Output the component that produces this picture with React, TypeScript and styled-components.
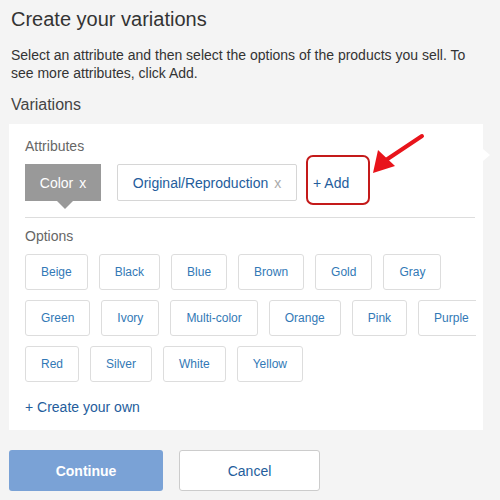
import React from "react";
import styled, { createGlobalStyle } from "styled-components";

const Global = createGlobalStyle`
  html, body { margin: 0; padding: 0; background: #f4f4f4; }
  body { font-family: "Liberation Sans", Arial, sans-serif; width: 500px; height: 500px; overflow: hidden; }
  * { box-sizing: border-box; }
`;

const Page = styled.div`
  position: relative;
  width: 500px;
  height: 500px;
  padding: 7px 0 0 9px;
`;

const Title = styled.h1`
  margin: 0 0 0 2px;
  font-size: 20px;
  font-weight: normal;
  line-height: 24px;
  color: #333;
`;

const Intro = styled.p`
  margin: 15px 0 0 2px;
  font-size: 14px;
  line-height: 18px;
  color: #333;
  width: 480px;
`;

const SectionTitle = styled.h2`
  margin: 13px 0 0 2px;
  font-size: 16px;
  font-weight: normal;
  line-height: 20px;
  color: #444;
`;

const Panel = styled.div`
  position: relative;
  margin-top: 9px;
  width: 474px;
  background: #fff;
  padding: 14px 7px 14px 16px;
  &::after {
    content: "";
    position: absolute;
    right: -7px;
    top: 25px;
    border-top: 6px solid transparent;
    border-bottom: 6px solid transparent;
    border-left: 7px solid #fff;
  }
`;

const Label = styled.div`
  font-size: 14px;
  line-height: 17px;
  color: #666;
`;

const AttrRow = styled.div`
  display: flex;
  align-items: center;
  margin-top: 9px;
  height: 37px;
`;

const ActiveChip = styled.div`
  position: relative;
  width: 76px;
  height: 37px;
  background: #999;
  color: #fff;
  font-size: 14px;
  display: flex;
  align-items: center;
  justify-content: center;
  gap: 6px;
  &::after {
    content: "";
    position: absolute;
    left: 32px;
    bottom: -8px;
    border-left: 8px solid transparent;
    border-right: 8px solid transparent;
    border-top: 8px solid #999;
  }
`;

const AttrChip = styled.div`
  margin-left: 16px;
  width: 180px;
  height: 37px;
  border: 1px solid #d6d6d6;
  border-radius: 2px;
  display: flex;
  align-items: center;
  justify-content: center;
  gap: 6px;
  font-size: 14px;
  color: #245d9c;
`;

const Remove = styled.span<{ $light?: boolean }>`
  color: ${(p) => (p.$light ? "#aaa" : "#fff")};
  font-size: 14px;
`;

const AddLink = styled.span`
  margin-left: 16px;
  font-size: 14px;
  color: #245d9c;
`;

const Divider = styled.hr`
  margin: 16px 0 0 0;
  width: 450px;
  border: none;
  border-top: 1px solid #ddd;
`;

const OptionsLabel = styled(Label)`
  margin-top: 10px;
`;

const Rows = styled.div`
  margin-top: 9px;
  width: 451px;
  overflow: hidden;
  display: flex;
  flex-direction: column;
  gap: 10px;
`;

const Row = styled.div`
  display: flex;
  gap: 11px;
  height: 36px;
`;

const Option = styled.button`
  flex: none;
  height: 36px;
  padding: 0 15px;
  background: #fff;
  border: 1px solid #ddd;
  border-radius: 3px;
  font-family: "Liberation Sans", Arial, sans-serif;
  font-size: 12px;
  color: #3279b6;
`;

const CreateOwn = styled.div`
  margin-top: 17px;
  font-size: 14px;
  line-height: 17px;
  color: #245d9c;
`;

const Actions = styled.div`
  display: flex;
  gap: 16px;
  margin-top: 20px;
`;

const Primary = styled.button`
  width: 154px;
  height: 41px;
  border: none;
  border-radius: 3px;
  background: #7aa2d6;
  color: #fff;
  font-family: "Liberation Sans", Arial, sans-serif;
  font-size: 14px;
  font-weight: bold;
`;

const Secondary = styled.button`
  width: 141px;
  height: 41px;
  border: 1px solid #ccc;
  border-radius: 3px;
  background: #fff;
  color: #245d9c;
  font-family: "Liberation Sans", Arial, sans-serif;
  font-size: 14px;
`;

const Highlight = styled.div`
  position: absolute;
  left: 306px;
  top: 155px;
  width: 64px;
  height: 50px;
  border: 2px solid #c41a1a;
  border-radius: 7px;
  pointer-events: none;
`;

const Arrow = styled.svg`
  position: absolute;
  left: 360px;
  top: 125px;
  pointer-events: none;
`;

const rows = [
  ["Beige", "Black", "Blue", "Brown", "Gold", "Gray"],
  ["Green", "Ivory", "Multi-color", "Orange", "Pink", "Purple"],
  ["Red", "Silver", "White", "Yellow"],
];

export default function App() {
  return (
    <>
      <Global />
      <Page>
        <Title>Create your variations</Title>
        <Intro>
          Select an attribute and then select the options of the products you sell. To see more
          attributes, click Add.
        </Intro>
        <SectionTitle>Variations</SectionTitle>
        <Panel>
          <Label>Attributes</Label>
          <AttrRow>
            <ActiveChip>
              Color <Remove>x</Remove>
            </ActiveChip>
            <AttrChip>
              Original/Reproduction <Remove $light>x</Remove>
            </AttrChip>
            <AddLink>+ Add</AddLink>
          </AttrRow>
          <Divider />
          <OptionsLabel>Options</OptionsLabel>
          <Rows>
            {rows.map((r, i) => (
              <Row key={i}>
                {r.map((o) => (
                  <Option key={o}>{o}</Option>
                ))}
              </Row>
            ))}
          </Rows>
          <CreateOwn>+ Create your own</CreateOwn>
        </Panel>
        <Actions>
          <Primary>Continue</Primary>
          <Secondary>Cancel</Secondary>
        </Actions>
        <Highlight />
        <Arrow width="80" height="60" viewBox="0 0 80 60">
          <line x1="62" y1="11" x2="26" y2="35" stroke="#e8141b" strokeWidth="4" strokeLinecap="round" />
          <polygon points="13,48 18,25 35,41" fill="#e8141b" />
        </Arrow>
      </Page>
    </>
  );
}
